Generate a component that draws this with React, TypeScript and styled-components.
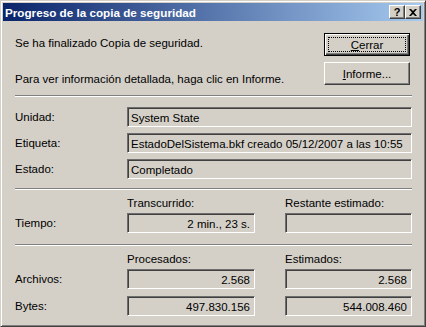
import { FunctionComponent, ReactNode } from "react";
import styled, { createGlobalStyle } from "styled-components";

const GlobalStyle = createGlobalStyle`
  html, body {
    margin: 0;
    padding: 0;
    background: #d4d0c8;
  }
  body {
    font-family: "Liberation Sans", Arial, sans-serif;
    font-size: 11.5px;
    color: #000;
  }
`;

const Window = styled.div`
  width: 426px;
  height: 327px;
  box-sizing: border-box;
  background: #d4d0c8;
  border: 1px solid;
  border-color: #d4d0c8 #404040 #404040 #d4d0c8;
  box-shadow: inset 1px 1px #fff, inset -1px -1px #808080;
  padding: 2px;
  display: flex;
  flex-direction: column;
`;

const TitleBar = styled.div`
  height: 18px;
  display: flex;
  align-items: center;
  justify-content: space-between;
  padding: 0 2px 0 2px;
  background: linear-gradient(to right, #0a246a, #a6caf0);
`;

const TitleText = styled.span`
  color: #fff;
  font-weight: bold;
  font-size: 11.7px;
`;

const TitleButtons = styled.div`
  display: flex;
`;

const CaptionButton = styled.div`
  width: 16px;
  height: 14px;
  box-sizing: border-box;
  border: 1px solid;
  border-color: #fff #404040 #404040 #fff;
  box-shadow: inset -1px -1px #808080;
  background: #d4d0c8;
  display: flex;
  align-items: center;
  justify-content: center;
  font-weight: bold;
  font-size: 11px;
  line-height: 1;
  color: #000;
`;

const Body = styled.div`
  padding: 12px 11px 0 12px;
  display: flex;
  flex-direction: column;
`;

const TopRow = styled.div`
  display: flex;
  justify-content: space-between;
  align-items: flex-start;
`;

const Messages = styled.div`
  display: flex;
  flex-direction: column;
  gap: 24px;
  padding-top: 4px;
`;

const Line = styled.div`
  line-height: 12px;
  height: 12px;
  white-space: nowrap;
`;

const ButtonColumn = styled.div`
  display: flex;
  flex-direction: column;
  gap: 6px;
  margin-right: 2px;
`;

const Button = styled.div<{ $default?: boolean }>`
  position: relative;
  width: 86px;
  height: 23px;
  box-sizing: border-box;
  background: #d4d0c8;
  display: flex;
  align-items: center;
  justify-content: center;
  border: 1px solid;
  border-color: ${(p) => (p.$default ? "#000" : "#fff #404040 #404040 #fff")};
  box-shadow: ${(p) =>
    p.$default
      ? "inset 1px 1px #fff, inset -1px -1px #404040, inset -2px -2px #808080"
      : "inset -1px -1px #808080"};

  &::after {
    content: "";
    display: ${(p) => (p.$default ? "block" : "none")};
    position: absolute;
    inset: 3px;
    border: 1px dotted #000;
  }
`;

const Separator = styled.div<{ $top: number }>`
  margin-top: ${(p) => p.$top}px;
  height: 0;
  border-top: 1px solid #808080;
  border-bottom: 1px solid #fff;
`;

const Grid = styled.div<{ $top: number; $rowGap: number }>`
  margin-top: ${(p) => p.$top}px;
  display: grid;
  grid-template-columns: 82px 128px 127px;
  column-gap: 30px;
  row-gap: ${(p) => p.$rowGap}px;
  align-items: center;
`;

const Label = styled.div`
  line-height: 14px;
  white-space: nowrap;
`;

const Field = styled.div<{ $wide?: boolean; $right?: boolean }>`
  grid-column: ${(p) => (p.$wide ? "2 / 4" : "auto")};
  height: 20px;
  box-sizing: border-box;
  border: 1px solid;
  border-color: #6e6e6e #fff #fff #6e6e6e;
  box-shadow: inset 1px 1px #404040;
  padding: 1px ${(p) => (p.$right ? "4px" : "2px")} 0 ${(p) => (p.$right ? "2px" : "3px")};
  display: flex;
  align-items: center;
  justify-content: ${(p) => (p.$right ? "flex-end" : "flex-start")};
  white-space: nowrap;
  overflow: hidden;
`;

const CloseGlyph: FunctionComponent = () => (
  <svg width="8" height="7" viewBox="0 0 8 7">
    <path d="M0 0h2l2 2 2-2h2L5 3.5 8 7H6L4 5 2 7H0l3-3.5z" fill="#000" />
  </svg>
);

const InfoRow: FunctionComponent<{ label: string; children: ReactNode }> = ({
  label,
  children,
}) => (
  <>
    <Label>{label}</Label>
    <Field $wide>{children}</Field>
  </>
);

const App: FunctionComponent = () => {
  return (
    <>
      <GlobalStyle />
      <Window>
        <TitleBar>
          <TitleText>Progreso de la copia de seguridad</TitleText>
          <TitleButtons>
            <CaptionButton>?</CaptionButton>
            <CaptionButton>
              <CloseGlyph />
            </CaptionButton>
          </TitleButtons>
        </TitleBar>
        <Body>
          <TopRow>
            <Messages>
              <Line>Se ha finalizado Copia de seguridad.</Line>
              <Line>Para ver información detallada, haga clic en Informe.</Line>
            </Messages>
            <ButtonColumn>
              <Button $default>
                <span>
                  <u>C</u>errar
                </span>
              </Button>
              <Button>
                <span>
                  <u>I</u>nforme...
                </span>
              </Button>
            </ButtonColumn>
          </TopRow>

          <Separator $top={10} />

          <Grid $top={10} $rowGap={6}>
            <InfoRow label="Unidad:">System State</InfoRow>
            <InfoRow label="Etiqueta:">
              EstadoDelSistema.bkf creado 05/12/2007 a las 10:55
            </InfoRow>
            <InfoRow label="Estado:">Completado</InfoRow>
          </Grid>

          <Separator $top={9} />

          <Grid $top={6} $rowGap={3}>
            <span />
            <Label>Transcurrido:</Label>
            <Label>Restante estimado:</Label>
            <Label>Tiempo:</Label>
            <Field $right>2 min., 23 s.</Field>
            <Field $right />
          </Grid>

          <Separator $top={11} />

          <Grid $top={6} $rowGap={3}>
            <span />
            <Label>Procesados:</Label>
            <Label>Estimados:</Label>
          </Grid>
          <Grid $top={3} $rowGap={7}>
            <Label>Archivos:</Label>
            <Field $right>2.568</Field>
            <Field $right>2.568</Field>
            <Label>Bytes:</Label>
            <Field $right>497.830.156</Field>
            <Field $right>544.008.460</Field>
          </Grid>
        </Body>
      </Window>
    </>
  );
};

export default App;
